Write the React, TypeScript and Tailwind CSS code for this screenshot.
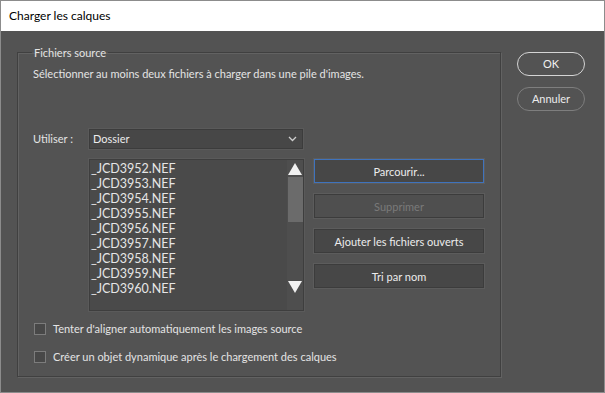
import React from "react";

const FILES = [
  "_JCD3952.NEF",
  "_JCD3953.NEF",
  "_JCD3954.NEF",
  "_JCD3955.NEF",
  "_JCD3956.NEF",
  "_JCD3957.NEF",
  "_JCD3958.NEF",
  "_JCD3959.NEF",
  "_JCD3960.NEF",
];

const font = { fontFamily: 'Lato, "Noto Sans", sans-serif' };

function DialogButton({ label, active, disabled }: { label: string; active?: boolean; disabled?: boolean }) {
  return (
    <button
      type="button"
      className={
        "h-[24px] w-full border text-[11px] leading-none shadow-[0_0_0_1px_#5c5c5c] " +
        (active ? "border-[#3f73bd] " : "border-[#3c3c3c] ") +
        (disabled ? "bg-[#4f4f4f] text-[#7a7a7a]" : "bg-[#474747] text-[#ececec]")
      }
    >
      {label}
    </button>
  );
}

function Checkbox({ label }: { label: string }) {
  return (
    <label className="flex h-[16px] items-center gap-[7px] text-[11px] text-[#e4e4e4]">
      <span className="ml-[1px] h-[12px] w-[12px] border border-[#7c7c7c] bg-[#484848]" />
      <span>{label}</span>
    </label>
  );
}

export default function App() {
  return (
    <div className="flex h-[393px] w-[605px] flex-col border border-[#8c8c8c] bg-[#535353]" style={font}>
      <div className="flex h-[30px] shrink-0 items-center bg-white pl-[8px] text-[12px] text-black">
        Charger les calques
      </div>

      <div className="flex flex-1">
        <fieldset className="ml-[16px] mt-[13px] h-[333px] w-[484px] border border-[#404040] shadow-[1px_1px_0_#626262,inset_1px_1px_0_#626262]">
          <legend className="relative top-[1px] ml-[14px] px-[2px] text-[11px] leading-[16px] text-[#e4e4e4]">
            Fichiers source
          </legend>
          <div className="flex flex-col pl-[15px]">
            <p className="mt-[6px] text-[11px] leading-[16px] text-[#e4e4e4]">
              Sélectionner au moins deux fichiers à charger dans une pile d'images.
            </p>

            <div className="mt-[47px] flex h-[20px] items-center">
              <span className="w-[56px] text-[11px] text-[#e4e4e4]">Utiliser :</span>
              <div className="flex h-[20px] w-[214px] items-center justify-between border border-[#3c3c3c] bg-[#474747] pl-[3px] pr-[5px] text-[11px] text-[#ececec] shadow-[0_0_0_1px_#5a5a5a]">
                <span>Dossier</span>
                <svg width="9" height="6" viewBox="0 0 9 6">
                  <path d="M1 1 L4.5 4.5 L8 1" fill="none" stroke="#cfcfcf" strokeWidth="1.3" />
                </svg>
              </div>
            </div>

            <div className="ml-[56px] mt-[10px] flex">
              <div className="flex h-[152px] w-[215px] border border-[#3e3e3e] bg-[#4a4a4a] shadow-[0_0_0_1px_#5a5a5a]">
                <ul className="flex-1 pl-[1px] pt-[1px] text-[12.5px] leading-[15px] text-[#e6e6e6]">
                  {FILES.map((f) => (
                    <li key={f}>{f}</li>
                  ))}
                </ul>
                <div className="flex w-[16px] flex-col items-center bg-[#4e4e4e] pt-[3px]">
                  <svg width="14" height="12" viewBox="0 0 14 12">
                    <path d="M7 0 L14 12 L0 12 Z" fill="#f2f2f2" />
                  </svg>
                  <div className="mt-[2px] h-[45px] w-[15px] bg-[#6b6b6b]" />
                  <div className="flex-1" />
                  <svg width="14" height="12" viewBox="0 0 14 12" className="mb-[17px]">
                    <path d="M0 0 L14 0 L7 12 Z" fill="#f2f2f2" />
                  </svg>
                </div>
              </div>

              <div className="ml-[10px] flex w-[170px] flex-col gap-[11px]">
                <DialogButton label="Parcourir..." active />
                <DialogButton label="Supprimer" disabled />
                <DialogButton label="Ajouter les fichiers ouverts" />
                <DialogButton label="Tri par nom" />
              </div>
            </div>

            <div className="mt-[10px] flex flex-col gap-[12px]">
              <Checkbox label="Tenter d'aligner automatiquement les images source" />
              <Checkbox label="Créer un objet dynamique après le chargement des calques" />
            </div>
          </div>
        </fieldset>

        <div className="ml-[16px] mt-[21px] flex w-[68px] flex-col gap-[11px]">
          <button
            type="button"
            className="h-[24px] rounded-full border-[1.5px] border-[#d4d4d4] text-[11px] text-[#f0f0f0]"
          >
            OK
          </button>
          <button
            type="button"
            className="h-[24px] rounded-full border-[1.5px] border-[#7e7e7e] text-[11px] text-[#ececec]"
          >
            Annuler
          </button>
        </div>
      </div>
    </div>
  );
}
